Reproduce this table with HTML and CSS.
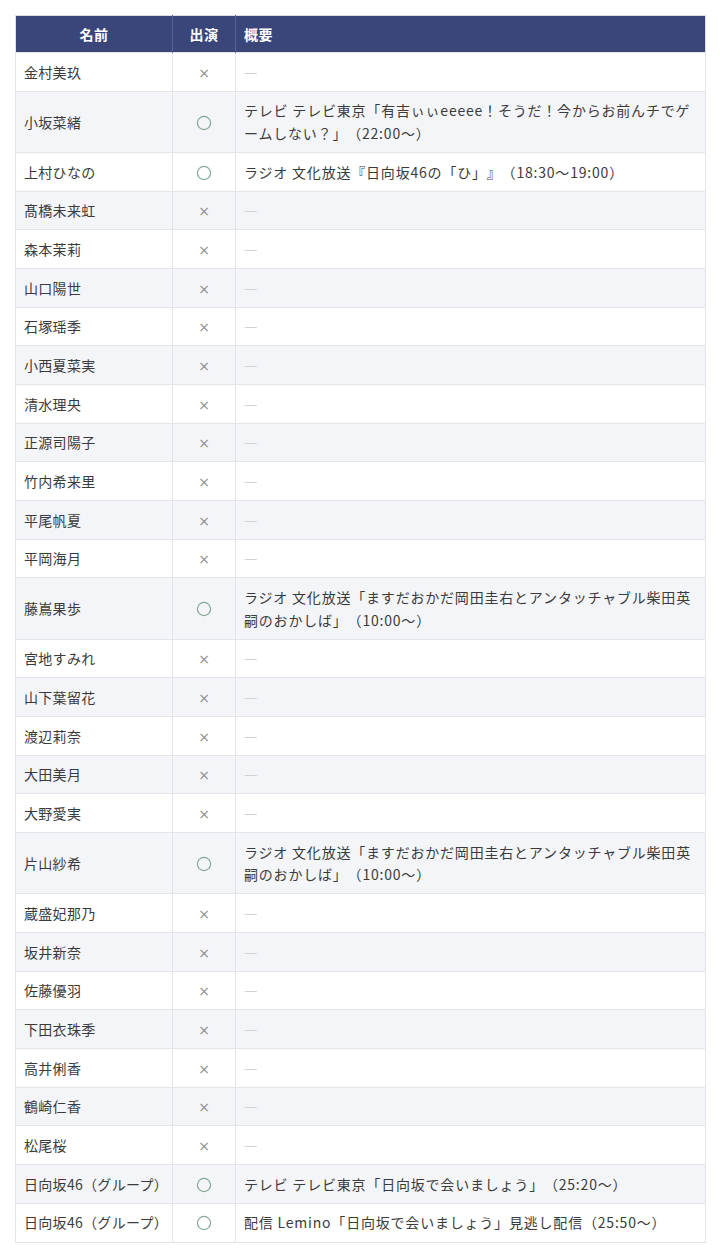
FILE: index.html
```html
<!DOCTYPE html>
<html lang="ja">
<head>
<meta charset="utf-8">
<title>出演一覧</title>
<link rel="stylesheet" href="styles.css">
</head>
<body>
<table class="cast">
  <colgroup>
    <col class="c-name">
    <col class="c-on">
    <col class="c-desc">
  </colgroup>
  <thead>
    <tr><th class="h-name">名前</th><th class="h-on">出演</th><th class="h-desc">概要</th></tr>
  </thead>
  <tbody>
    <tr><td class="name">金村美玖</td><td class="mark"><span class="x">×</span></td><td class="desc"><span class="dash">—</span></td></tr>
    <tr><td class="name">小坂菜緒</td><td class="mark"><svg class="o" viewBox="0 0 16 16"><circle cx="8" cy="8" r="6.6"/></svg></td><td class="desc">テレビ テレビ東京「有吉ぃぃeeeee！そうだ！今からお前んチでゲームしない？」（22:00〜）</td></tr>
    <tr><td class="name">上村ひなの</td><td class="mark"><svg class="o" viewBox="0 0 16 16"><circle cx="8" cy="8" r="6.6"/></svg></td><td class="desc">ラジオ 文化放送『日向坂46の「ひ」』（18:30〜19:00）</td></tr>
    <tr><td class="name">髙橋未来虹</td><td class="mark"><span class="x">×</span></td><td class="desc"><span class="dash">—</span></td></tr>
    <tr><td class="name">森本茉莉</td><td class="mark"><span class="x">×</span></td><td class="desc"><span class="dash">—</span></td></tr>
    <tr><td class="name">山口陽世</td><td class="mark"><span class="x">×</span></td><td class="desc"><span class="dash">—</span></td></tr>
    <tr><td class="name">石塚瑶季</td><td class="mark"><span class="x">×</span></td><td class="desc"><span class="dash">—</span></td></tr>
    <tr><td class="name">小西夏菜実</td><td class="mark"><span class="x">×</span></td><td class="desc"><span class="dash">—</span></td></tr>
    <tr><td class="name">清水理央</td><td class="mark"><span class="x">×</span></td><td class="desc"><span class="dash">—</span></td></tr>
    <tr><td class="name">正源司陽子</td><td class="mark"><span class="x">×</span></td><td class="desc"><span class="dash">—</span></td></tr>
    <tr><td class="name">竹内希来里</td><td class="mark"><span class="x">×</span></td><td class="desc"><span class="dash">—</span></td></tr>
    <tr><td class="name">平尾帆夏</td><td class="mark"><span class="x">×</span></td><td class="desc"><span class="dash">—</span></td></tr>
    <tr><td class="name">平岡海月</td><td class="mark"><span class="x">×</span></td><td class="desc"><span class="dash">—</span></td></tr>
    <tr><td class="name">藤嶌果歩</td><td class="mark"><svg class="o" viewBox="0 0 16 16"><circle cx="8" cy="8" r="6.6"/></svg></td><td class="desc">ラジオ 文化放送「ますだおかだ岡田圭右とアンタッチャブル柴田英嗣のおかしば」（10:00〜）</td></tr>
    <tr><td class="name">宮地すみれ</td><td class="mark"><span class="x">×</span></td><td class="desc"><span class="dash">—</span></td></tr>
    <tr><td class="name">山下葉留花</td><td class="mark"><span class="x">×</span></td><td class="desc"><span class="dash">—</span></td></tr>
    <tr><td class="name">渡辺莉奈</td><td class="mark"><span class="x">×</span></td><td class="desc"><span class="dash">—</span></td></tr>
    <tr><td class="name">大田美月</td><td class="mark"><span class="x">×</span></td><td class="desc"><span class="dash">—</span></td></tr>
    <tr><td class="name">大野愛実</td><td class="mark"><span class="x">×</span></td><td class="desc"><span class="dash">—</span></td></tr>
    <tr><td class="name">片山紗希</td><td class="mark"><svg class="o" viewBox="0 0 16 16"><circle cx="8" cy="8" r="6.6"/></svg></td><td class="desc">ラジオ 文化放送「ますだおかだ岡田圭右とアンタッチャブル柴田英嗣のおかしば」（10:00〜）</td></tr>
    <tr><td class="name">蔵盛妃那乃</td><td class="mark"><span class="x">×</span></td><td class="desc"><span class="dash">—</span></td></tr>
    <tr><td class="name">坂井新奈</td><td class="mark"><span class="x">×</span></td><td class="desc"><span class="dash">—</span></td></tr>
    <tr><td class="name">佐藤優羽</td><td class="mark"><span class="x">×</span></td><td class="desc"><span class="dash">—</span></td></tr>
    <tr><td class="name">下田衣珠季</td><td class="mark"><span class="x">×</span></td><td class="desc"><span class="dash">—</span></td></tr>
    <tr><td class="name">高井俐香</td><td class="mark"><span class="x">×</span></td><td class="desc"><span class="dash">—</span></td></tr>
    <tr><td class="name">鶴崎仁香</td><td class="mark"><span class="x">×</span></td><td class="desc"><span class="dash">—</span></td></tr>
    <tr><td class="name">松尾桜</td><td class="mark"><span class="x">×</span></td><td class="desc"><span class="dash">—</span></td></tr>
    <tr><td class="name">日向坂46（グループ）</td><td class="mark"><svg class="o" viewBox="0 0 16 16"><circle cx="8" cy="8" r="6.6"/></svg></td><td class="desc">テレビ テレビ東京「日向坂で会いましょう」（25:20〜）</td></tr>
    <tr><td class="name">日向坂46（グループ）</td><td class="mark"><svg class="o" viewBox="0 0 16 16"><circle cx="8" cy="8" r="6.6"/></svg></td><td class="desc">配信 Lemino「日向坂で会いましょう」見逃し配信（25:50〜）</td></tr>
  </tbody>
</table>
</body>
</html>
```

FILE: styles.css
```css
html, body {
  margin: 0;
  padding: 0;
  background: #ffffff;
}

body {
  padding: 15px 15px 0 15px;
  font-family: "Noto Sans CJK JP", "Noto Sans", sans-serif;
  font-size: 14px;
  color: #3b3b3b;
}

.cast {
  width: 690px;
  border-collapse: collapse;
  table-layout: fixed;
  border: 1px solid #dcdfe5;
}

.c-name { width: 157px; }
.c-on { width: 63px; }
.c-desc { width: 470px; }

.cast th {
  background: #3a4679;
  color: #ffffff;
  font-weight: 700;
  font-size: 14px;
  line-height: 22px;
  padding: 7px 8px;
  border-left: 1px solid #58638f;
  letter-spacing: 0.5px;
}

.cast th:first-child { border-left: none; }

.h-name, .h-on { text-align: center; }
.h-desc { text-align: left; }

.cast td {
  padding: 7.5px 8px;
  line-height: 22.67px;
  border: 1px solid #e3e5ea;
  vertical-align: middle;
}

.cast td.name {
  white-space: nowrap;
  letter-spacing: 0.3px;
  padding-right: 0;
}

.cast td.desc {
  letter-spacing: 0.8px;
  word-break: break-all;
  text-spacing-trim: space-all;
}

.cast tbody tr:nth-child(even) td {
  background: #f4f5f8;
}

.cast td.mark {
  text-align: center;
  padding-left: 0;
  padding-right: 0;
}

.x {
  color: #8e8e8e;
  font-size: 14px;
  line-height: 1;
  font-family: "DejaVu Sans", sans-serif;
}

.o {
  width: 16px;
  height: 16px;
  vertical-align: -3px;
  fill: none;
  stroke: #86a898;
  stroke-width: 1.2;
}

.dash {
  color: #d0d2d6;
  font-size: 15px;
  line-height: 1;
  letter-spacing: 0;
}
```
